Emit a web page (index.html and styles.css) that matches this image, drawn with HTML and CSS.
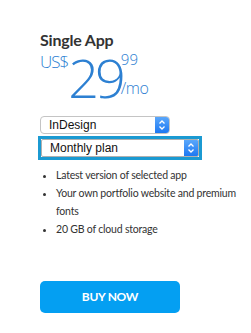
FILE: index.html
```html
<html lang="en">

<head>
    <meta charset="UTF-8">
    <meta name="viewport" content="width=device-width, initial-scale=1.0">
    <title>Single App</title>
    <link rel="stylesheet" href="styles.css">
</head>

<body>
    <div class="edge">
        <span class="edge-a">e</span>
        <span class="edge-b">s</span>
    </div>

    <div class="plan">
        <h2>Single App</h2>

        <div class="price">
            <span class="currency">US$</span>
            <span class="whole">29</span>
            <span class="tail">
                <span class="cents">99</span>
                <span class="per">/mo</span>
            </span>
        </div>

        <div class="select app">
            <span class="label">InDesign</span>
            <span class="arrows">
                <svg width="8" height="12" viewBox="0 0 8 12"><path d="M1.5 4.5 L4 2 L6.5 4.5 M1.5 7.5 L4 10 L6.5 7.5" fill="none" stroke="#fff" stroke-width="1.3"/></svg>
            </span>
        </div>

        <div class="focus">
            <div class="select term">
                <span class="label">Monthly plan</span>
                <span class="arrows">
                    <svg width="8" height="12" viewBox="0 0 8 12"><path d="M1.5 4.5 L4 2 L6.5 4.5 M1.5 7.5 L4 10 L6.5 7.5" fill="none" stroke="#fff" stroke-width="1.3"/></svg>
                </span>
            </div>
        </div>

        <ul class="features">
            <li>Latest version of selected app</li>
            <li>Your own portfolio website and premium fonts</li>
            <li>20 GB of cloud storage</li>
        </ul>

        <a class="buy" href="#">BUY NOW</a>
    </div>
</body>

</html>
```

FILE: styles.css
```css
body {
    margin: 0;
    background-color: #ffffff;
    font-family: Lato, "Open Sans", Arial, sans-serif;
    color: #333333;
    position: relative;
    width: 251px;
    height: 333px;
    overflow: hidden;
}

.edge {
    position: absolute;
    left: -6px;
    top: 163px;
    font-size: 11px;
    line-height: 18px;
    color: #444444;
}

.edge span {
    display: block;
}

.plan {
    padding: 29px 0 0 40px;
    width: 200px;
}

h2 {
    margin: 0;
    font-size: 16px;
    font-weight: 700;
    line-height: 22px;
    color: #333333;
    letter-spacing: -0.2px;
}

.price {
    display: flex;
    align-items: flex-start;
    color: #2d80d2;
    font-family: "Open Sans", Arial, sans-serif;
    height: 52px;
}

.currency {
    font-size: 17px;
    font-weight: 300;
    line-height: 18px;
    letter-spacing: -1px;
    margin-top: 2px;
}

.whole {
    font-size: 54px;
    font-weight: 300;
    line-height: 50px;
    letter-spacing: -4px;
    margin-top: 1px;
}

.tail {
    display: flex;
    flex-direction: column;
    margin-left: -1px;
}

.cents {
    font-size: 15px;
    font-weight: 300;
    line-height: 16px;
}

.per {
    font-size: 16px;
    font-weight: 300;
    line-height: 18px;
    margin-top: 12px;
    letter-spacing: -0.5px;
}

.select {
    display: flex;
    align-items: center;
    justify-content: space-between;
    background-color: #ffffff;
    border: 1px solid #c4c4c4;
    border-radius: 4px;
    height: 16px;
    font-family: "Liberation Sans", Arial, sans-serif;
    font-size: 12px;
    color: #111111;
    overflow: hidden;
}

.select .label {
    padding-left: 8px;
}

.arrows {
    display: flex;
    align-items: center;
    justify-content: center;
    width: 14px;
    height: 100%;
    background: linear-gradient(#5aa7fb, #1d78f2);
}

.app {
    width: 128px;
    margin-top: 13px;
}

.focus {
    margin: 2px 0 0 -2px;
    width: 158px;
    border: 3px solid #1b9ad2;
}

.term {
    border-radius: 2px;
    border-color: #b0b0b0;
}

.features {
    margin: 6px 0 0;
    padding: 0 0 0 16px;
    font-size: 10.5px;
    line-height: 18px;
    letter-spacing: -0.2px;
    color: #333333;
}

.buy {
    display: block;
    width: 140px;
    height: 32px;
    margin-top: 43px;
    background-color: #049ff2;
    border-radius: 5px;
    color: #ffffff;
    font-size: 12px;
    font-weight: 700;
    line-height: 32px;
    text-align: center;
    text-decoration: none;
    letter-spacing: -0.3px;
}
```
